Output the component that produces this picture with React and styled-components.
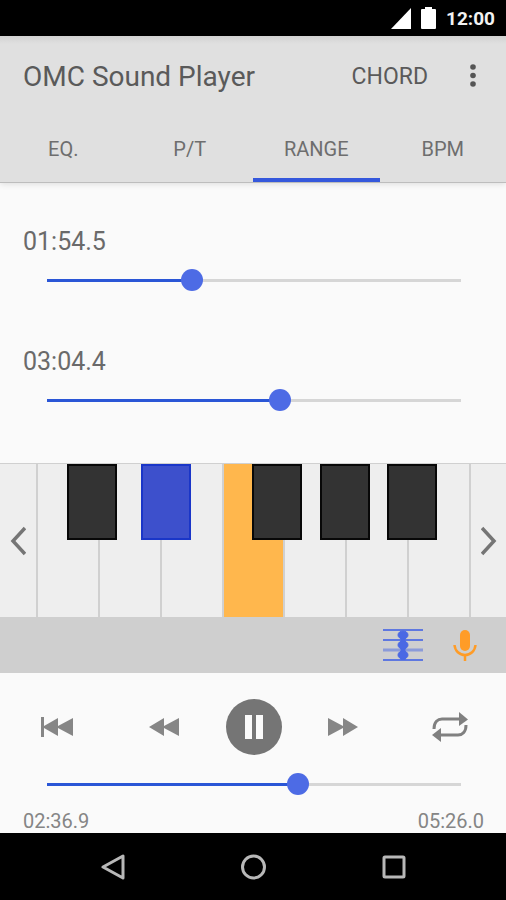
import { useState } from "react"
import styled, { createGlobalStyle, css } from "styled-components"

const TABS = ["EQ.", "P/T", "RANGE", "BPM"]
const WHITE_KEYS = ["C", "D", "E", "F", "G", "A", "B"]
const BLACK_KEYS = [
    { note: "C#", left: 7.2 },
    { note: "D#", left: 24.3 },
    { note: "F#", left: 49.8 },
    { note: "G#", left: 65.5 },
    { note: "A#", left: 81.1 },
]
const TRACK_LENGTH = 328

const formatTime = (seconds) => {
    const minutes = String(Math.floor(seconds / 60)).padStart(2, "0")
    return `${minutes}:${(seconds % 60).toFixed(1).padStart(4, "0")}`
}

const Slider = ({ label, min, max, value, onChange }) => {
    const fill = ((value - min) / (max - min)) * 100

    return (
        <SliderInput
            type="range"
            aria-label={label}
            min={min}
            max={max}
            step="0.1"
            value={value}
            onChange={(e) => onChange(Number(e.target.value))}
            style={{ "--fill": `${fill}%` }}
        />
    )
}

const StatusBar = () => (
    <StatusBarWrapper>
        <svg width="20" height="21" viewBox="0 0 20 21" fill="#fff">
            <path d="M20 0V21H0Z" />
        </svg>
        <svg width="15" height="22" viewBox="0 0 15 22" fill="#fff">
            <path d="M4 0H11V2H14Q15 2 15 3V21Q15 22 14 22H1Q0 22 0 21V3Q0 2 1 2H4Z" />
        </svg>
        <Clock>12:00</Clock>
    </StatusBarWrapper>
)

const AppHeader = ({ tab, onTab }) => (
    <Header>
        <Toolbar>
            <Title>OMC Sound Player</Title>
            <ChordButton>CHORD</ChordButton>
            <MenuButton aria-label="More options">
                <svg width="6" height="24" viewBox="0 0 6 24" fill="#555">
                    <circle cx="3" cy="3" r="2.8" />
                    <circle cx="3" cy="11.5" r="2.8" />
                    <circle cx="3" cy="20" r="2.8" />
                </svg>
            </MenuButton>
        </Toolbar>
        <TabList role="tablist">
            {TABS.map((name) => (
                <Tab
                    key={name}
                    role="tab"
                    aria-selected={tab === name}
                    $active={tab === name}
                    onClick={() => onTab(name)}
                >
                    {name}
                </Tab>
            ))}
        </TabList>
    </Header>
)

const Piano = () => (
    <PianoWrapper>
        <OctaveButton aria-label="Previous octave">
            <svg width="16" height="30" viewBox="0 0 16 30" fill="none" stroke="#757575" strokeWidth="3.5">
                <path d="M15 2L3 15L15 28" />
            </svg>
        </OctaveButton>
        <Keys>
            {WHITE_KEYS.map((note) => (
                <WhiteKey key={note} aria-label={note} $active={note === "F"} />
            ))}
            {BLACK_KEYS.map(({ note, left }) => (
                <BlackKey key={note} aria-label={note} $left={left} $active={note === "D#"} />
            ))}
        </Keys>
        <OctaveButton aria-label="Next octave" $right>
            <svg width="16" height="30" viewBox="0 0 16 30" fill="none" stroke="#757575" strokeWidth="3.5">
                <path d="M1 2L13 15L1 28" />
            </svg>
        </OctaveButton>
    </PianoWrapper>
)

const InputBar = () => (
    <InputBarWrapper>
        <PlainButton aria-label="Show chord">
            <svg width="40" height="32" viewBox="0 0 40 32" fill="#4a68e4" stroke="#4a68e4">
                <path d="M0 1H40M0 11H40M0 31H40" strokeWidth="2" stroke="#5f78e0" />
                <path d="M0 21H40" strokeWidth="3" opacity="0.5" />
                <path d="M20 3V31" strokeWidth="5" />
                <ellipse cx="20" cy="6" rx="5" ry="4" />
                <ellipse cx="20" cy="16" rx="5" ry="4" />
                <ellipse cx="20" cy="26" rx="5" ry="4" />
            </svg>
        </PlainButton>
        <PlainButton aria-label="Microphone">
            <svg width="24" height="32" viewBox="0 0 24 32" fill="none" stroke="#ff9c27">
                <rect x="7" y="1" width="10" height="21" rx="5" fill="#ff9c27" stroke="none" />
                <path d="M1.5 16C2 22 6.5 26 12 26S22 22 22.5 16M12 26V32" strokeWidth="2.5" />
            </svg>
        </PlainButton>
    </InputBarWrapper>
)

const Controls = () => (
    <ControlsRow>
        <ControlButton aria-label="Back to start" $wide>
            <svg width="32" height="20" viewBox="0 0 32 20" fill="#868686">
                <path d="M0 0H3V9L17 1V9L32 1V19L17 11V19L3 11V20H0Z" />
            </svg>
        </ControlButton>
        <ControlButton aria-label="Rewind">
            <svg width="32" height="20" viewBox="0 0 32 20" fill="#868686">
                <path d="M1 10L16 1V9L31 1V19L16 11V19Z" />
            </svg>
        </ControlButton>
        <PauseButton aria-label="Pause">
            <svg width="18" height="24" viewBox="0 0 18 24" fill="#fafafa">
                <path d="M0 0H7V24H0ZM11 0H18V24H11Z" />
            </svg>
        </PauseButton>
        <ControlButton aria-label="Fast forward">
            <svg width="32" height="20" viewBox="0 0 32 20" fill="#868686">
                <path d="M31 10L16 1V9L1 1V19L16 11V19Z" />
            </svg>
        </ControlButton>
        <ControlButton aria-label="Repeat" $wide>
            <svg width="36" height="30" viewBox="0 0 36 30" fill="#808080">
                <path d="M2 17C2 10 6 7 10 7H28" fill="none" stroke="#808080" strokeWidth="3" />
                <path d="M27 0L36 7.5L27 14Z" />
                <path d="M34 13C34 20 30 23 26 23H8" fill="none" stroke="#808080" strokeWidth="3" />
                <path d="M9 16L0 23L9 30Z" />
            </svg>
        </ControlButton>
    </ControlsRow>
)

const SystemNav = () => (
    <SystemNavWrapper>
        <PlainButton aria-label="Back">
            <svg width="26" height="26" viewBox="0 0 26 26" fill="none" stroke="#b8b8b8" strokeWidth="3" strokeLinejoin="round">
                <path d="M23 2V24L3 13Z" />
            </svg>
        </PlainButton>
        <PlainButton aria-label="Home">
            <svg width="26" height="26" viewBox="0 0 26 26" fill="none" stroke="#b8b8b8" strokeWidth="3">
                <circle cx="13.5" cy="13" r="11" />
            </svg>
        </PlainButton>
        <PlainButton aria-label="Recent apps">
            <svg width="26" height="26" viewBox="0 0 26 26" fill="none" stroke="#b8b8b8" strokeWidth="3">
                <rect x="4" y="3" width="20" height="20" rx="1" />
            </svg>
        </PlainButton>
    </SystemNavWrapper>
)

export default function App() {
    const [tab, setTab] = useState("RANGE")
    const [start, setStart] = useState(114.5)
    const [end, setEnd] = useState(184.4)
    const [position, setPosition] = useState(156.9)

    return (
        <>
            <GlobalStyle />
            <Screen>
                <StatusBar />
                <AppHeader tab={tab} onTab={setTab} />
                <RangePanel>
                    <RangeField>
                        <RangeTime>{formatTime(start)}</RangeTime>
                        <Slider label="Range start" min={0} max={TRACK_LENGTH} value={start} onChange={setStart} />
                    </RangeField>
                    <RangeField>
                        <RangeTime>{formatTime(end)}</RangeTime>
                        <Slider label="Range end" min={0} max={TRACK_LENGTH} value={end} onChange={setEnd} />
                    </RangeField>
                </RangePanel>
                <Piano />
                <InputBar />
                <Player>
                    <Controls />
                    <Slider label="Position" min={start} max={end} value={position} onChange={setPosition} />
                    <PlayerTimes>
                        <span>{formatTime(position)}</span>
                        <span>05:26.0</span>
                    </PlayerTimes>
                </Player>
                <SystemNav />
            </Screen>
        </>
    )
}

const GlobalStyle = createGlobalStyle`
    * {
        box-sizing: border-box;
    }
    body {
        margin: 0;
        background: #fafafa;
        font-family: Roboto, "Liberation Sans", sans-serif;
        color: #616161;
    }
    svg {
        display: block;
    }
`

const Screen = styled.div`
    display: flex;
    flex-direction: column;
    min-height: 100vh;
`

const PlainButton = styled.button`
    display: flex;
    align-items: center;
    justify-content: center;
    padding: 0;
    border: 0;
    background: none;
    font: inherit;
    color: inherit;
    cursor: pointer;
`

const StatusBarWrapper = styled.div`
    display: flex;
    align-items: center;
    justify-content: flex-end;
    gap: 10px;
    height: 36px;
    padding-right: 11px;
    background: #000;
`
const Clock = styled.span`
    font-size: 19px;
    font-weight: 700;
    color: #f2f2f2;
`

const Header = styled.header`
    position: relative;
    background: linear-gradient(#d2d2d2, #e0e0e0 8px);
    border-bottom: 1px solid #bdbdbd;
    box-shadow: 0 1px 6px rgba(0, 0, 0, 0.12);
`
const Toolbar = styled.div`
    display: flex;
    align-items: center;
    height: 80px;
    padding: 0 18px 0 23px;
`
const Title = styled.h1`
    margin: 0 auto 0 0;
    font-size: 28px;
    font-weight: 400;
    color: #5a5a5a;
`
const ChordButton = styled(PlainButton)`
    font-size: 23px;
    color: #5a5a5a;
`
const MenuButton = styled(PlainButton)`
    width: 30px;
    height: 48px;
    margin-left: 30px;
`
const TabList = styled.div`
    display: grid;
    grid-template-columns: repeat(4, 1fr);
    height: 66px;
`
const Tab = styled(PlainButton)`
    border-top: 4px solid transparent;
    border-bottom: 4px solid ${({ $active }) => ($active ? "#3558dc" : "transparent")};
    font-size: 20px;
    color: #6e6e6e;
`

const RangePanel = styled.main`
    display: flex;
    flex: 1;
    flex-direction: column;
    gap: 56px;
    padding: 45px 0 48px;
`
const RangeField = styled.div`
    display: flex;
    flex-direction: column;
    gap: 12px;
`
const RangeTime = styled.span`
    padding-left: 23px;
    font-size: 25px;
    line-height: 28px;
    color: #6a6a6a;
`

const SliderInput = styled.input`
    appearance: none;
    height: 24px;
    margin: 0 34px 0 36px;
    background: linear-gradient(
            to right,
            #2a56d6 var(--fill),
            #d6d6d6 var(--fill)
        )
        center / calc(100% - 22px) 3px no-repeat;
    cursor: pointer;

    &::-webkit-slider-thumb {
        appearance: none;
        width: 22px;
        height: 22px;
        border-radius: 50%;
        background: #4d6be5;
    }
`

const PianoWrapper = styled.div`
    display: grid;
    grid-template-columns: 36px 1fr 37px;
    height: 154px;
    border-top: 1px solid #d0d0d0;
    background: #eee;
`
const OctaveButton = styled(PlainButton)`
    ${({ $right }) =>
        $right &&
        css`
            border-left: 2px solid #d0d0d0;
        `}
`
const Keys = styled.div`
    position: relative;
    display: grid;
    grid-template-columns: repeat(7, 1fr);
`
const WhiteKey = styled(PlainButton)`
    border-left: 2px solid #d0d0d0;
    background: ${({ $active }) => ($active ? "#ffb74d" : "#eee")};
`
const BlackKey = styled(PlainButton)`
    position: absolute;
    top: 0;
    left: ${({ $left }) => $left}%;
    width: 50px;
    height: 76px;
    border: 2px solid ${({ $active }) => ($active ? "#1a36c8" : "#080808")};
    background: ${({ $active }) => ($active ? "#3d50cc" : "#333")};
`

const InputBarWrapper = styled.div`
    display: flex;
    align-items: center;
    justify-content: flex-end;
    gap: 30px;
    height: 56px;
    padding-right: 29px;
    background: #cfcfcf;
`

const Player = styled.footer`
    display: flex;
    flex-direction: column;
    padding-top: 26px;
`
const ControlsRow = styled.div`
    display: flex;
    align-items: center;
    justify-content: space-between;
    margin-bottom: 17px;
    padding: 0 11px 0 12px;
`
const ControlButton = styled(PlainButton)`
    width: ${({ $wide }) => ($wide ? "90px" : "48px")};
    height: 48px;
`
const PauseButton = styled(PlainButton)`
    width: 56px;
    height: 56px;
    border-radius: 50%;
    background: #757575;
`
const PlayerTimes = styled.div`
    display: flex;
    justify-content: space-between;
    padding: 13px 22px 0 23px;
    font-size: 20px;
    line-height: 24px;
    color: #858585;
`

const SystemNavWrapper = styled.nav`
    display: grid;
    grid-template-columns: repeat(3, 140px);
    justify-content: center;
    height: 67px;
    background: #000;
`
